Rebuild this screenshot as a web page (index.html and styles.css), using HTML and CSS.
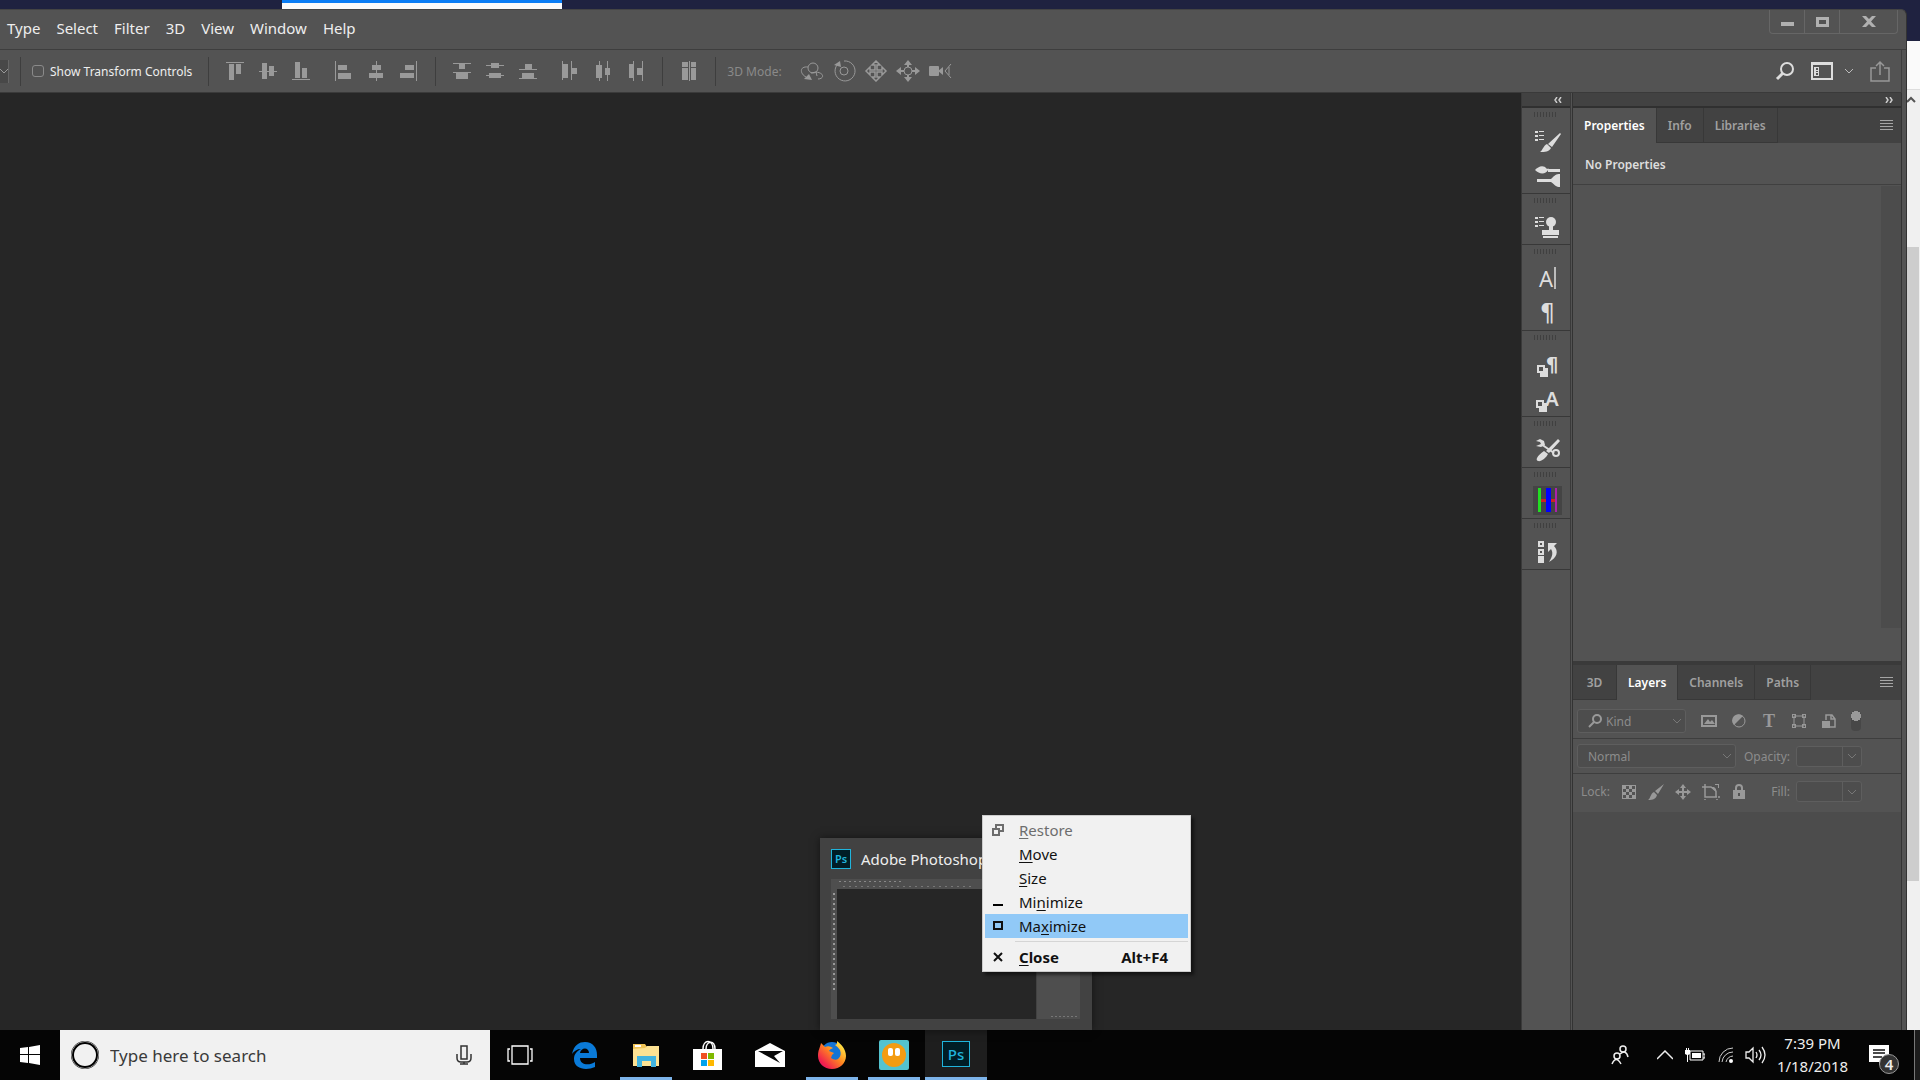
FILE: index.html
```
<!DOCTYPE html>
<html lang="en">
<head>
    <meta charset="UTF-8">
    <meta name="viewport" content="width=device-width, initial-scale=1.0">
    <title>Adobe Photoshop</title>
    <link rel="stylesheet" href="styles.css">
</head>
<body>

<div class="desktop">
    <div class="behind-tab"></div>
    <div class="screen">
        <div class="app">
            <div class="title-row">
                <nav class="menu">
                    <button>Type</button>
                    <button>Select</button>
                    <button>Filter</button>
                    <button>3D</button>
                    <button>View</button>
                    <button>Window</button>
                    <button>Help</button>
                </nav>
                <div class="window-buttons">
                    <button aria-label="Minimize"><svg width="13" height="11"><path d="M0 6h13v4H0z"/></svg></button>
                    <button aria-label="Maximize"><svg width="13" height="11"><path fill-rule="evenodd" d="M0 1h13v10H0zM3 4v4h7V4z"/></svg></button>
                    <button class="wide" aria-label="Close"><svg width="14" height="11"><path d="M0 0h4l3 3 3-3h4L9 5.500l5 5.500h-4L7 8l-3 3H0l5-5.500z"/></svg></button>
                </div>
            </div>

            <div class="options">
                <button class="tool-pick" aria-label="Tool options"><svg width="8" height="6"><path class="line" d="M0 1l4 4 4-4"/></svg></button>
                <span class="divider"></span>
                <label class="check"><input type="checkbox"> Show Transform Controls</label>
                <span class="divider"></span>
                <div class="tools three">
                    <button aria-label="Align top"><svg width="20" height="20"><path d="M1 1h18v1H1zM4 3h5v16H4zM11 3h5v10h-5z"/></svg></button>
                    <button aria-label="Align middle"><svg width="20" height="20"><path d="M1 10h18v1H1zM4 2h5v16H4zM11 5h5v10h-5z"/></svg></button>
                    <button aria-label="Align bottom"><svg width="20" height="20"><path d="M1 18h18v1H1zM4 1h5v16H4zM11 7h5v10h-5z"/></svg></button>
                </div>
                <div class="tools three">
                    <button aria-label="Align left"><svg width="20" height="20"><path d="M2 0h1v20H2zM5 4h9v5H5zM5 12h13v6H5z"/></svg></button>
                    <button aria-label="Align center"><svg width="20" height="20"><path d="M10 0h1v20h-1zM6 4h9v5H6zM3 12h14v5H3z"/></svg></button>
                    <button aria-label="Align right"><svg width="20" height="20"><path d="M17 0h1v20h-1zM6 4h9v5H6zM1 12h14v5H1z"/></svg></button>
                </div>
                <span class="divider"></span>
                <div class="tools three">
                    <button aria-label="Distribute top"><svg width="20" height="20"><path d="M1 2h18v1H1zM7 3h6v5H7zM1 11h18v1H1zM4 12h12v6H4z"/></svg></button>
                    <button aria-label="Distribute middle"><svg width="20" height="20"><path d="M1 4h18v1H1zM6 2h8v5H6zM1 14h18v1H1zM4 12h12v5H4z"/></svg></button>
                    <button aria-label="Distribute bottom"><svg width="20" height="20"><path d="M1 8h18v1H1zM7 3h7v5H7zM1 17h18v1H1zM4 12h12v5H4z"/></svg></button>
                </div>
                <div class="tools three">
                    <button aria-label="Distribute left"><svg width="20" height="20"><path d="M2 0h1v19H2zM3 3h5v14H3zM11 0h1v19h-1zM12 7h5v6h-5z"/></svg></button>
                    <button aria-label="Distribute center"><svg width="20" height="20"><path d="M6 0h1v20H6zM3 4h6v13H3zM14 0h1v20h-1zM12 7h5v7h-5z"/></svg></button>
                    <button aria-label="Distribute right"><svg width="20" height="20"><path d="M7 0h1v20H7zM3 3h5v14H3zM16 0h1v20h-1zM11 7h5v7h-5z"/></svg></button>
                </div>
                <span class="divider"></span>
                <div class="tools">
                    <button aria-label="Auto align"><svg width="20" height="20"><path d="M3 1h6v5H3zM3 7h6v12H3zM10 0h1v20h-1zM12 1h5v5h-5zM12 7h5v12h-5z"/></svg></button>
                </div>
                <span class="divider"></span>
                <span class="mode">3D Mode:</span>
                <div class="tools">
                    <button aria-label="Orbit"><svg width="24" height="22"><g class="line"><circle cx="13" cy="8" r="5"/><path d="M8 7C-1 6 0 14 6 17M16 12c9 1 8 7 2 7M11 13l5-1 1 4"/></g><path d="M4 19l5-5 3 6z"/></svg></button>
                    <button aria-label="Roll"><svg width="24" height="22"><g class="line"><circle cx="12" cy="11" r="4"/><path d="M5 5a10 10 0 1 0 7-4"/></g><path d="M2 5l6-4 1 6z"/></svg></button>
                    <button aria-label="Pan"><svg width="24" height="22"><path class="line heavy" d="M12 1l4 4h-3v5h5V7l4 4-4 4v-3h-5v5h3l-4 4-4-4h3v-5H6v3l-4-4 4-4v3h5V5H8z"/></svg></button>
                    <button aria-label="Slide"><svg width="24" height="22"><circle class="line" cx="12" cy="11" r="4"/><path d="M12 0l4 5h-3v2h-2V5H8zM12 22l-4-5h3v-2h2v2h3zM0 11l5-4v3h3v2H5v3zM24 11l-5 4v-3h-3v-2h3V7z"/></svg></button>
                    <button aria-label="Zoom camera"><svg width="24" height="22"><rect x="1" y="6" width="10" height="10" rx="1"/><path d="M10 11l5-4v8z"/><path class="line" d="M23 4l-6 7 6 7M21 7v8"/></svg></button>
                </div>
                <div class="right-tools">
                    <button aria-label="Search"><svg width="20" height="20"><circle cx="12" cy="8" r="6" fill="none" stroke="#ddd" stroke-width="2"/><path d="M8 12l-6 6" stroke="#ddd" stroke-width="3"/></svg></button>
                    <div class="workspace">
                        <button aria-label="Workspace"><svg width="22" height="18"><path fill="none" stroke="#ddd" stroke-width="2" d="M1 2h20v15H1z"/><path fill="#ddd" d="M0 0h22v3H0zM3 5h5v9H3z"/><path fill="#555" d="M5 6h2v2H5zM5 9h2v1H5zM5 11h2v2H5z"/></svg></button>
                        <button aria-label="Workspace list"><svg width="9" height="6"><path d="M0 1l4 4 4-4" fill="none" stroke="#bbb"/></svg></button>
                    </div>
                    <button aria-label="Share"><svg width="20" height="22"><path d="M6 8H1v13h18V8h-5M10 15V2M6 6l4-4 4 4" fill="none" stroke="#989898" stroke-width="1.500"/></svg></button>
                </div>
            </div>

            <div class="work">
                <main class="canvas"></main>

                <aside class="dock">
                    <button class="collapse" aria-label="Expand panels"><svg width="8" height="6"><path d="M3 0L1 3l2 3M7 0L5 3l2 3" fill="none" stroke="#ccc" stroke-width="1.500"/></svg></button>
                    <div class="dock-group">
                        <i class="grip"></i>
                        <button aria-label="Brush presets"><svg width="26" height="24"><path d="M0 2h3v2H0zM4 2h5v1H4zM0 6h3v2H0zM4 6h5v1H4zM0 10h3v2H0zM4 10h5v1H4z"/><path d="M26 5l-9 13-4-3L25 4zM12 15l4 4c-2 4-6 4-11 4 3-2 3-6 7-8z"/></svg></button>
                        <button aria-label="Brush"><svg width="26" height="24"><path d="M0 6c3-3 8-6 12-1 3-1 1 0 1 1-2 4-8 5-13 0zM13 5h12v3H13zM2 15h14v3H2zM16 15c4-4 5-5 9-5v13c-4 0-5-2-9-5z"/></svg></button>
                    </div>
                    <div class="dock-group">
                        <i class="grip"></i>
                        <button aria-label="Clone source"><svg width="26" height="24"><path d="M0 2h3v2H0zM4 2h5v1H4zM0 6h3v2H0zM4 6h5v1H4zM0 10h3v2H0zM4 10h5v1H4z"/><circle cx="16" cy="7" r="5"/><path d="M14 10h4v5h6v5H7v-5h7zM8 21h15v2H8z"/></svg></button>
                    </div>
                    <div class="dock-group">
                        <i class="grip"></i>
                        <button class="glyph" aria-label="Character"><span class="caret">A</span></button>
                        <button class="glyph pilcrow" aria-label="Paragraph">¶</button>
                    </div>
                    <div class="dock-group">
                        <i class="grip"></i>
                        <button class="glyph small" aria-label="Paragraph styles"><svg width="11" height="12"><path fill-rule="evenodd" d="M0 0h8v3h3v9H3V8H0zM2 2v4h4V2z"/></svg><span class="pilcrow">¶</span></button>
                        <button class="glyph small" aria-label="Character styles"><svg width="11" height="12"><path fill-rule="evenodd" d="M0 0h8v3h3v9H3V8H0zM2 2v4h4V2z"/></svg><span>A</span></button>
                    </div>
                    <div class="dock-group">
                        <i class="grip"></i>
                        <button aria-label="Tool presets"><svg width="26" height="24"><path d="M23 1l2 2-11 12-3-2zM9 13l4 3c-2 4-7 8-10 7s-1-5 6-10z"/><path d="M6 6l13 9" stroke="#ddd" stroke-width="2"/><path d="M1 3l4-2 4 2 1 4-4 2-5-1 5-2-1-2z"/><circle cx="21" cy="15" r="3" fill="none" stroke="#ddd" stroke-width="2"/></svg></button>
                    </div>
                    <div class="dock-group">
                        <i class="grip"></i>
                        <button aria-label="Colour extension"><svg width="29" height="29"><path fill="#444" d="M0 0h29v29H0z"/><path fill="#c22" d="M7 13h16v3H7z"/><path fill="#2d2" d="M5 2h3v24H5z"/><path fill="#00f" d="M13 2h5v24h-5z"/><path fill="#a2a" d="M22 2h2v24h-2z"/></svg></button>
                    </div>
                    <div class="dock-group">
                        <i class="grip"></i>
                        <button aria-label="History"><svg width="26" height="24"><path fill-rule="evenodd" d="M3 1h6v6H3zM5 3v2h2V3zM3 9h6v6H3zM5 11v2h2v-2zM3 16h6v7H3z"/><path d="M13 3h9l-3 3c5 5 3 12-5 16 4-6 4-10 2-13l-3 3z"/></svg></button>
                    </div>
                </aside>

                <aside class="panels">
                    <div class="panels-head"><button class="collapse" aria-label="Collapse panels"><svg width="8" height="6"><path d="M1 0l2 3-2 3M5 0l2 3-2 3" fill="none" stroke="#ccc" stroke-width="1.500"/></svg></button></div>
                    <section class="panel properties">
                        <div class="tabs">
                            <button class="tab active">Properties</button>
                            <button class="tab">Info</button>
                            <button class="tab">Libraries</button>
                            <button class="panel-menu" aria-label="Panel menu"></button>
                        </div>
                        <div class="no-props">No Properties</div>
                        <div class="props-body"><div class="track"></div></div>
                    </section>
                    <section class="panel layers">
                        <div class="tabs">
                            <button class="tab">3D</button>
                            <button class="tab active">Layers</button>
                            <button class="tab">Channels</button>
                            <button class="tab">Paths</button>
                            <button class="panel-menu" aria-label="Panel menu"></button>
                        </div>
                        <div class="row filter-row">
                            <div class="picker kind">
                                <svg width="14" height="14"><circle class="line thick" cx="9" cy="5" r="4"/><path class="line thick" d="M6 8l-5 5"/></svg>
                                <select aria-label="Filter kind"><option>Kind</option></select>
                                <svg width="8" height="6"><path class="line dim" d="M0 1l4 4 4-4"/></svg>
                            </div>
                            <div class="icons">
                                <button aria-label="Pixel layers"><svg width="16" height="14"><path fill-rule="evenodd" d="M0 1h16v12H0zM2 3v8h12V3zM3 10l4-5 2 3 2-2 3 4z"/></svg></button>
                                <button aria-label="Adjustment layers"><svg width="16" height="14"><circle class="line" cx="8" cy="7" r="6"/><path d="M12 2A6 6 0 0 0 3 11z"/></svg></button>
                                <button class="type-icon" aria-label="Type layers">T</button>
                                <button aria-label="Shape layers"><svg width="16" height="14"><path class="line" d="M3 2h10v10H3z"/><path fill-rule="evenodd" d="M1 0h4v4H1zM2 1v2h2V1zM11 0h4v4h-4zM12 1v2h2V1zM1 10h4v4H1zM2 11v2h2v-2zM11 10h4v4h-4zM12 11v2h2v-2z"/></svg></button>
                                <button aria-label="Smart objects"><svg width="16" height="14"><path class="line heavy" d="M5 6V1h6l3 4v8h-5M10 1v4h4"/><path d="M1 7h8v7H1z"/></svg></button>
                            </div>
                            <button class="switch" aria-label="Filter switch"></button>
                        </div>
                        <div class="row">
                            <div class="picker blend">
                                <select aria-label="Blend mode"><option>Normal</option></select>
                                <svg width="8" height="6"><path class="line dim" d="M0 1l4 4 4-4"/></svg>
                            </div>
                            <label for="opacity">Opacity:</label>
                            <div class="amount"><input type="text" id="opacity"><button aria-label="Opacity slider"><svg width="8" height="6"><path class="line dim" d="M0 1l4 4 4-4"/></svg></button></div>
                        </div>
                        <div class="row lock-row">
                            <span class="lock-label">Lock:</span>
                            <div class="icons">
                                <button aria-label="Lock transparent pixels"><svg width="16" height="16"><path fill-rule="evenodd" d="M1 1h14v14H1zM5 2v3H2v3h3v3H2v3h3v-3h3v3h3v-3h3V8h-3V5h3V2h-3v3H8V2zM5 5h3v3H5zM8 8h3v3H8z"/></svg></button>
                                <button aria-label="Lock image pixels"><svg width="16" height="16"><path d="M16 0l-6 10-3-3zM6 8l3 3c-1 4-4 5-9 5 3-2 2-6 6-8z"/></svg></button>
                                <button aria-label="Lock position"><svg width="16" height="16"><path d="M8 0l3 4H9v3h3V5l4 3-4 3V9H9v3h2l-3 4-3-4h2V9H4v2L0 8l4-3v2h3V4H5z"/></svg></button>
                                <button aria-label="Lock artboard"><svg width="18" height="16"><path class="line heavy" d="M3 0v13h12M3 15v1M0 3h9l5 4v6M15 15v1M16 13h2"/><path d="M9 3l5 5V5l-2-2zM13 0h4v4h-1V1h-3z"/></svg></button>
                                <button aria-label="Lock all"><svg width="16" height="16"><path fill-rule="evenodd" d="M2 6h12v9H2zM7 9v3h2V9z"/><path class="line thick" d="M5 7V4a3 3 0 0 1 6 0v3"/></svg></button>
                            </div>
                            <label for="fill">Fill:</label>
                            <div class="amount"><input type="text" id="fill"><button aria-label="Fill slider"><svg width="8" height="6"><path class="line dim" d="M0 1l4 4 4-4"/></svg></button></div>
                        </div>
                        <div class="layer-list"></div>
                    </section>
                </aside>
            </div>
        </div>

        <div class="browser-edge">
            <div class="browser-top"></div>
            <div class="browser-bar"></div>
            <div class="scroll">
                <svg width="10" height="8"><path d="M0 7l4-4 4 4" fill="none" stroke="#555" stroke-width="2"/></svg>
                <div class="thumb"></div>
            </div>
        </div>
    </div>

    <footer class="taskbar">
        <button class="start" aria-label="Start"><svg width="20" height="20"><path fill="#fff" d="M0 3l8-1v7H0zM9 2l11-2v9H9zM0 10h8v8l-8-1zM9 10h11v10L9 18z"/></svg></button>
        <label class="search">
            <span class="ring"></span>
            <input type="text" placeholder="Type here to search">
            <svg width="16" height="20"><path d="M5 1h6v13H5zM1 9v4q0 4 4 4h6q4 0 4-4V9M8 17v2M4 19h8" fill="none" stroke="#333" stroke-width="1.500"/></svg>
        </label>
        <div class="apps">
            <button class="task-view" aria-label="Task view"><svg width="26" height="20"><path d="M5 1h16v18H5zM3 4H1v12h2M23 4h2v12h-2" fill="none" stroke="#fff" stroke-width="1.300"/></svg></button>
            <button aria-label="Edge"><svg width="26" height="28"><path fill="#0a7ad8" d="M1 13C3 4 8 1 14 1c8 0 12 6 12 13v3H9c0 7 9 8 15 4v5C15 30 3 28 3 18c0-5 3-8 7-10-4 0-7 2-9 5zM9 12h9c0-6-8-6-9 0z"/></svg></button>
            <button class="open" aria-label="File Explorer"><svg width="28" height="26"><path fill="#f0c456" d="M1 2h12l2 3h12v19H1z"/><path fill="#fde293" d="M1 7l12-1 2-2h12v20H1z"/><path fill="#fff" d="M3 3h6v2H3z"/><path fill="#42b4e0" d="M5 14h19v11h-5v-6h-9v6H5z"/></svg></button>
            <button aria-label="Store"><svg width="30" height="30"><path d="M10 9c0-10 10-10 10 0M13 9c0-8 9-10 9 0" fill="none" stroke="#fff" stroke-width="1.500"/><path fill="#fff" d="M0 9h29v21H0z"/><path fill="#f05023" d="M8 13h6v6H8z"/><path fill="#7fb900" d="M15 13h6v6h-6z"/><path fill="#00a3ee" d="M8 20h6v6H8z"/><path fill="#feb800" d="M15 20h6v6h-6z"/></svg></button>
            <button aria-label="Mail"><svg width="30" height="24"><path fill="#fff" d="M0 8l15-8 15 8v16H0z"/><path fill="#080808" d="M3 8h25l-9 5 6 7z"/></svg></button>
            <button class="open" aria-label="Firefox"><svg width="28" height="28">
                <defs><linearGradient id="fox" x1="1" y1="0" x2="0" y2="1"><stop offset="0.100" stop-color="#fff04a"/><stop offset="0.450" stop-color="#ff8a1f"/><stop offset="0.800" stop-color="#f0204e"/><stop offset="1" stop-color="#d5107a"/></linearGradient></defs>
                <circle cx="14" cy="12" r="11" fill="#1474d4"/>
                <path fill="url(#fox)" d="M3 2l4 4q4-2 8 1-3 1-4 3l5 2q-3 2-3 5 4 3 7 1 4-3 2-9-2-3-5-5l2-1V0c4 3 9 8 9 15 0 7-6 13-14 13S0 22 0 15C0 9 2 7 3 2z"/>
            </svg></button>
            <button class="open" aria-label="GoPro Quik"><svg width="30" height="30"><rect width="30" height="30" rx="2" fill="#53c3cf"/><circle cx="15" cy="15" r="12" fill="#f39c12"/><rect x="9" y="8" width="5" height="8" rx="2" fill="#fff"/><rect x="16" y="8" width="5" height="8" rx="2" fill="#fff"/></svg></button>
            <button class="open current" aria-label="Adobe Photoshop"><span class="ps big">Ps</span></button>
        </div>
        <div class="tray">
            <button aria-label="People"><svg width="18" height="20"><g fill="none" stroke="#eee" stroke-width="1.500"><circle cx="12" cy="4" r="3"/><circle cx="6" cy="11" r="3"/><path d="M9 9q6-5 8 3M1 19q4-9 9 0"/></g></svg></button>
            <button class="more" aria-label="Hidden icons"><svg width="16" height="10"><path d="M0 9l8-8 8 8" fill="none" stroke="#eee" stroke-width="1.500"/></svg></button>
            <button class="battery" aria-label="Battery"><svg width="20" height="14"><path d="M5 3h13v9H5zM18 6h2v4h-2" fill="none" stroke="#fff"/><path fill="#fff" d="M7 5h9v5H7zM0 2h5v4L3 7v7H2V7L0 6zM1 0h1v2H1zM3 0h1v2H3z"/></svg></button>
            <button class="wifi" aria-label="Network"><svg width="16" height="16"><g fill="none" stroke="#ccc"><path d="M1 15A14 14 0 0 1 15 1M4 15A11 11 0 0 1 15 5M8 15a8 8 0 0 1 7-6"/></g><circle cx="13" cy="14" r="2" fill="#fff"/></svg></button>
            <button class="volume" aria-label="Volume"><svg width="22" height="18"><path d="M1 6h3l4-4v14l-4-4H1zM11 6q2 3 0 6M14 4q4 5 0 10M17 1q6 8 0 16" fill="none" stroke="#eee" stroke-width="1.300"/></svg></button>
            <div class="clock"><span>7:39 PM</span><span>1/18/2018</span></div>
            <button class="notes" aria-label="Notifications"><svg width="20" height="20"><path fill="#fff" d="M0 0h20v17h-7l-3 3v-3H0z"/><path d="M4 5h12M4 8h12M4 12h9" stroke="#111" stroke-width="1.300"/></svg><span class="badge">4</span></button>
            <span class="show-desktop"></span>
        </div>
    </footer>
</div>

<div class="preview">
    <div class="preview-title"><span class="ps">Ps</span>Adobe Photoshop</div>
    <div class="mini">
        <div class="mini-top"></div>
        <div class="mini-work"><div class="mini-tools"></div><div class="mini-canvas"></div><div class="mini-panel"></div></div>
    </div>
</div>

<div class="context-menu">
    <button disabled><svg width="12" height="12"><path d="M1 5h6v6H1zM4 4V1h7v6H8" fill="none" stroke="#6d6d6d" stroke-width="2"/></svg><span><u>R</u>estore</span></button>
    <button><svg width="12" height="12"></svg><span><u>M</u>ove</span></button>
    <button><svg width="12" height="12"></svg><span><u>S</u>ize</span></button>
    <button><svg width="12" height="12"><path d="M1 8h10v2H1z"/></svg><span>Mi<u>n</u>imize</span></button>
    <button class="selected"><svg width="12" height="12"><path d="M2 2h8v7H2z" fill="none" stroke="#111" stroke-width="2"/></svg><span>Ma<u>x</u>imize</span></button>
    <hr>
    <button class="close"><svg width="12" height="12"><path d="M2 2l8 8M10 2l-8 8" fill="none" stroke="#111" stroke-width="2"/></svg><span><u>C</u>lose</span><kbd>Alt+F4</kbd></button>
</div>

</body>
</html>
```
FILE: styles.css
```
* {
    box-sizing: border-box;
}

body {
    font-family: "Noto Sans", "Open Sans", sans-serif;
    background-color: #1f2240;
    margin: 0;
    overflow: hidden;
}

button,
input,
select {
    font-family: inherit;
    color: inherit;
    background: none;
    border: none;
    padding: 0;
    margin: 0;
}

svg {
    display: block;
    flex: none;
}

.desktop {
    height: 100vh;
    display: flex;
    flex-direction: column;
}

.behind-tab {
    width: 280px;
    height: 9px;
    flex: none;
    margin-left: 282px;
    background-color: #fafafa;
    border-top: 3px solid #0a7df5;
}

.screen {
    flex: 1;
    min-height: 0;
    display: flex;
}

.app {
    flex: 1;
    min-width: 0;
    display: flex;
    flex-direction: column;
    background-color: #535353;
    border-top: 1px solid #444;
    border-right: 1px solid #333;
    border-top-right-radius: 6px;
}

/* menu and window buttons */

.title-row {
    height: 40px;
    display: flex;
    justify-content: space-between;
    border-bottom: 1px solid #3e3e3e;
}

.menu {
    display: flex;
    align-items: center;
    gap: 16px;
    padding: 0 0 4px 7px;
    color: #eee;
}

.menu button {
    font-size: 15px;
}

.window-buttons {
    height: 24px;
    display: flex;
    margin-right: 8px;
    border: 1px solid #666;
    border-top: none;
    border-radius: 0 0 4px 4px;
    fill: #b0b0b0;
}

.window-buttons button {
    width: 35px;
    display: flex;
    align-items: center;
    justify-content: center;
    border-right: 1px solid #666;
}

.window-buttons .wide {
    width: 57px;
    border-right: none;
}

/* options bar */

.options {
    height: 43px;
    margin-right: 4px;
    display: flex;
    align-items: center;
    border-right: 1px solid #3e3e3e;
    border-bottom: 1px solid #3a3a3a;
    fill: #999;
}

.line {
    fill: none;
    stroke: #999;
}

.heavy {
    stroke-width: 1.5;
}

.thick {
    stroke-width: 2;
}

.dim {
    stroke: #777;
}

.tool-pick {
    width: 9px;
    height: 23px;
    background-color: #484848;
    border-right: 1px solid #666;
    margin-right: 11px;
}

.divider {
    width: 1px;
    height: 29px;
    background-color: #3e3e3e;
}

.check {
    display: flex;
    align-items: center;
    gap: 6px;
    margin: 0 16px 0 11px;
    font-size: 12px;
    color: #eee;
}

.check input {
    appearance: none;
    width: 12px;
    height: 12px;
    border: 1px solid #8a8a8a;
    border-radius: 3px;
}

.tools {
    display: flex;
    gap: 8px;
    padding: 0 16px;
}

.three {
    gap: 13px;
    padding: 0 0 0 16px;
}

.three + .three {
    padding: 0 16px 0 22px;
}

.mode {
    margin-left: 11px;
    padding-right: 2px;
    font-size: 12px;
    color: #8a8a8a;
}

.right-tools {
    margin-left: auto;
    margin-right: 11px;
    display: flex;
    align-items: center;
    gap: 16px;
}

.workspace {
    display: flex;
    align-items: center;
    gap: 12px;
}

/* work area */

.work {
    flex: 1;
    min-height: 0;
    display: flex;
    padding-right: 4px;
}

.canvas {
    flex: 1;
    background-color: #262626;
}

.dock {
    width: 50px;
    margin-right: 1px;
    border: solid #3a3a3a;
    border-width: 0 1px;
    fill: #ddd;
    color: #ddd;
}

.collapse {
    width: 100%;
    height: 15px;
    display: flex;
    align-items: center;
    justify-content: flex-end;
    padding-right: 8px;
    background-color: #424242;
    border-bottom: 2px solid #303030;
}

.dock-group {
    display: flex;
    flex-direction: column;
    align-items: center;
    padding-top: 4px;
    border-bottom: 1px solid #383838;
}

.grip {
    width: 24px;
    height: 5px;
    margin-bottom: 6px;
    background: repeating-linear-gradient(90deg, #404040 0 1px, #535353 1px 3px);
}

.dock-group button {
    height: 35px;
    display: flex;
    align-items: center;
    justify-content: center;
    padding-left: 3px;
}

.dock-group .glyph {
    font-size: 22px;
    line-height: 24px;
}

.caret {
    height: 22px;
    line-height: 22px;
    padding-right: 1px;
    border-right: 2px solid #bbb;
}

.dock-group .pilcrow {
    font-family: "DejaVu Sans", sans-serif;
    font-size: 24px;
}

.dock-group .small {
    font-size: 20px;
}

.dock-group .small svg {
    align-self: flex-end;
    margin-right: -2px;
    margin-bottom: 4px;
}

.dock-group .small span {
    font-size: 20px;
    font-weight: 600;
}

.panels {
    width: 330px;
    display: flex;
    flex-direction: column;
    border: solid #333;
    border-width: 0 1px;
}

.panel {
    display: flex;
    flex-direction: column;
}

.properties {
    height: 553px;
}

.layers {
    flex: 1;
    border-top: 4px solid #3a3a3a;
    fill: #999;
}

.tabs {
    height: 35px;
    display: flex;
    flex: none;
    background-color: #424242;
}

.tab {
    min-width: 44px;
    padding: 0 11px;
    font-size: 12px;
    font-weight: 600;
    color: #a0a0a0;
    border-right: 1px solid #383838;
    border-bottom: 1px solid #383838;
}

.tab.active {
    color: #fff;
    background-color: #535353;
    border-bottom: none;
}

.panel-menu {
    width: 13px;
    height: 10px;
    margin: 12px 8px 0 auto;
    background: repeating-linear-gradient(#a5a5a5 0 1px, #424242 1px 3px);
}

.no-props {
    height: 42px;
    padding: 13px 12px;
    font-size: 12px;
    line-height: 17px;
    font-weight: 600;
    color: #ddd;
    border-bottom: 1px solid #404040;
}

.props-body {
    flex: 1;
    display: flex;
    justify-content: flex-end;
    padding: 1px 0 33px;
}

.track {
    width: 20px;
    background-color: #4c4c4c;
}

.row {
    height: 35px;
    flex: none;
    display: flex;
    align-items: center;
    padding-left: 4px;
    border-bottom: 1px solid #3e3e3e;
    font-size: 12px;
    color: #8c8c8c;
}

.row label {
    margin-left: auto;
}

.filter-row {
    height: 39px;
    padding-top: 4px;
}

.lock-row {
    height: 38px;
    padding-bottom: 3px;
    border-bottom: none;
}

.picker {
    height: 24px;
    display: flex;
    align-items: center;
    gap: 4px;
    padding: 0 4px 0 10px;
    background-color: #4d4d4d;
    border: 1px solid #5e5e5e;
    border-radius: 3px;
}

.picker select {
    appearance: none;
    flex: 1;
    min-width: 0;
    font-size: 12px;
}

.kind {
    width: 109px;
}

.blend {
    width: 159px;
}

.icons {
    display: flex;
    align-items: center;
    gap: 14px;
    margin-left: 15px;
}

.type-icon {
    width: 16px;
    font: bold 18px "Liberation Serif", serif;
    line-height: 14px;
    color: #999;
}

.switch {
    width: 10px;
    height: 20px;
    margin-left: 14px;
    border-radius: 4px;
    background: radial-gradient(circle at 5px 5px, #999 5px, #474747 5px);
}

.amount {
    width: 66px;
    height: 21px;
    display: flex;
    margin-left: 6px;
    margin-right: 39px;
    background-color: #4d4d4d;
    border: 1px solid #5e5e5e;
    border-radius: 3px;
}

.amount input {
    flex: 1;
    min-width: 0;
}

.amount button {
    width: 19px;
    display: flex;
    align-items: center;
    justify-content: center;
    border-left: 1px solid #5e5e5e;
}

.lock-label {
    margin-left: 4px;
}

.lock-row .icons {
    gap: 11px;
    margin-left: 11px;
}

.layer-list {
    flex: 1;
    background-color: #4c4c4c;
}

/* the browser window behind */

.browser-edge {
    width: 13px;
    display: flex;
    flex-direction: column;
}

.browser-top {
    height: 32px;
}

.browser-bar {
    height: 49px;
    background-color: #fafafa;
    border-bottom: 1px solid #ddd;
}

.scroll {
    flex: 1;
    background-color: #f0f0f0;
    padding-top: 5px;
}

.thumb {
    width: 12px;
    height: 634px;
    margin-top: 144px;
    background-color: #cdcdcd;
}

/* taskbar */

.taskbar {
    height: 50px;
    flex: none;
    display: flex;
    background-color: #050505;
    color: #eee;
}

.start {
    width: 60px;
    display: flex;
    align-items: center;
    justify-content: center;
}

.search {
    width: 430px;
    display: flex;
    align-items: center;
    padding: 0 18px 0 11px;
    background-color: #f1f1f1;
}

.ring {
    width: 28px;
    height: 28px;
    border: 3px solid #000;
    border-radius: 50%;
    outline: 1px solid #999;
    outline-offset: -1px;
}

.search input {
    flex: 1;
    margin-left: 11px;
    font-size: 17px;
}

.search input::placeholder {
    color: #3a3a3a;
}

.apps {
    display: flex;
}

.apps button {
    width: 62px;
    display: flex;
    align-items: center;
    justify-content: center;
}

.apps .task-view {
    width: 63px;
    padding-right: 3px;
}

.apps .open {
    border: solid transparent;
    border-width: 0 5px;
    background: linear-gradient(#7db4ea, #7db4ea) bottom / 100% 3px no-repeat padding-box;
}

.apps .current {
    border-width: 0;
    padding-bottom: 3px;
    background-color: #1e1e1e;
}

.ps {
    width: 20px;
    height: 20px;
    display: inline-flex;
    align-items: center;
    justify-content: center;
    background-color: #001d26;
    border: 1px solid #20b4dc;
    color: #20b4dc;
    font-size: 11px;
    font-weight: 600;
}

.big {
    width: 28px;
    height: 26px;
    font-size: 15px;
    font-weight: 500;
}

.tray {
    display: flex;
    align-items: center;
    margin-left: auto;
}

.more {
    margin-left: 28px;
}

.battery {
    margin-left: 12px;
}

.wifi {
    margin-left: 13px;
}

.volume {
    margin-left: 11px;
}

.clock {
    width: 91px;
    display: flex;
    flex-direction: column;
    align-items: center;
    font-size: 15px;
    line-height: 23px;
}

.notes {
    position: relative;
    margin: 0 25px 0 11px;
}

.badge {
    position: absolute;
    left: 10px;
    top: 9px;
    width: 20px;
    height: 20px;
    border: 1px solid #999;
    border-radius: 50%;
    background-color: #333;
    font-size: 15px;
    font-weight: 600;
    line-height: 18px;
}

.show-desktop {
    width: 6px;
    height: 50px;
    border-left: 1px solid #777;
    background-color: #1c1c1c;
}

/* window preview above the taskbar */

.preview {
    position: absolute;
    left: 820px;
    bottom: 50px;
    width: 272px;
    padding: 11px;
    background-color: #424242;
    box-shadow: 0 0 8px rgba(0, 0, 0, 0.5);
}

.preview-title {
    height: 30px;
    display: flex;
    align-items: flex-start;
    gap: 10px;
    font-size: 15px;
    line-height: 20px;
    white-space: nowrap;
    color: #eee;
}

.mini {
    width: 249px;
    height: 140px;
    display: flex;
    flex-direction: column;
    background-color: #4e4e4e;
}

.mini-top {
    height: 10px;
    background: repeating-linear-gradient(90deg, #888 0 2px, transparent 2px 5px) 8px 2px / 65px 1px no-repeat,
                repeating-linear-gradient(90deg, #777 0 2px, transparent 2px 6px) 12px 7px / 130px 1px no-repeat;
}

.mini-work {
    flex: 1;
    display: flex;
}

.mini-tools {
    width: 6px;
    background: repeating-linear-gradient(#999 0 2px, transparent 2px 5px) 2px 4px / 2px 100px no-repeat;
}

.mini-canvas {
    width: 199px;
    background-color: #262626;
}

.mini-panel {
    flex: 1;
    background: repeating-linear-gradient(90deg, #777 0 2px, transparent 2px 4px) 14px 127px / 26px 1px no-repeat;
    border-left: 1px solid #424242;
}

/* window menu */

.context-menu {
    position: absolute;
    left: 982px;
    bottom: 108px;
    width: 209px;
    padding: 2px;
    background-color: #f1f1f1;
    border: 1px solid #ccc;
    box-shadow: 3px 3px 3px rgba(0, 0, 0, 0.5);
}

.context-menu button {
    width: 100%;
    height: 24px;
    display: flex;
    align-items: center;
    padding: 0 20px 0 7px;
    font-size: 15px;
    color: #111;
}

.context-menu button:disabled {
    color: #6d6d6d;
}

.context-menu .selected {
    background-color: #91c9f7;
}

.context-menu span {
    margin-left: 15px;
}

.context-menu u {
    text-underline-offset: 2px;
}

.context-menu hr {
    margin: 3px 0 3px 30px;
    border: none;
    border-top: 1px solid #d5d5d5;
}

.context-menu .close {
    font-weight: bold;
}

.context-menu kbd {
    margin-left: auto;
    font-family: inherit;
}
```
